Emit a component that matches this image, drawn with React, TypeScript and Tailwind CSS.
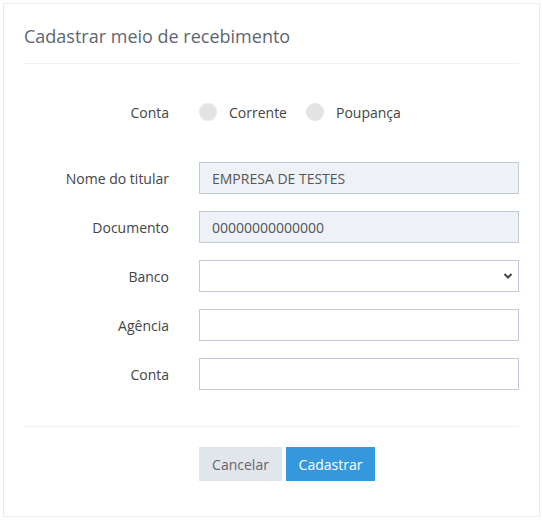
import React from "react";

function Field({ label, children }: { label: string; children: React.ReactNode }) {
  return (
    <div className="flex items-center">
      <label className="w-[145px] pr-0 text-right text-[14px] text-[#444]">{label}</label>
      <div className="ml-[30px] w-[320px]">{children}</div>
    </div>
  );
}

function Radio({ label }: { label: string }) {
  return (
    <label className="flex items-center gap-[12px] text-[14px] text-[#444]">
      <span className="block h-[18px] w-[18px] rounded-full bg-[#e3e3e3]" />
      {label}
    </label>
  );
}

export default function App() {
  return (
    <div className="p-[3px] font-['Open_Sans',sans-serif]">
      <div className="w-[537px] border border-[#e7ecf1] bg-white px-[20px] pb-[35px]">
        {/* Header */}
        <div className="border-b border-[#eef1f5] pt-[19px] pb-[14px]">
          <h1 className="text-[18px] leading-[26px] text-[#5e6670]">Cadastrar meio de recebimento</h1>
        </div>

        {/* Tipo de conta */}
        <div className="mt-[39px] flex h-[18px] items-center">
          <span className="w-[145px] text-right text-[14px] text-[#444]">Conta</span>
          <div className="ml-[30px] flex items-center gap-[19px]">
            <Radio label="Corrente" />
            <Radio label="Poupança" />
          </div>
        </div>

        {/* Campos */}
        <div className="mt-[41px] flex flex-col gap-[17px]">
          <Field label="Nome do titular">
            <input
              readOnly
              value="EMPRESA DE TESTES"
              className="h-[32px] w-full border border-[#c2cad8] bg-[#eef1f5] px-[12px] text-[14px] text-[#555] outline-none"
            />
          </Field>
          <Field label="Documento">
            <input
              readOnly
              value="00000000000000"
              className="h-[32px] w-full border border-[#c2cad8] bg-[#eef1f5] px-[12px] text-[14px] text-[#555] outline-none"
            />
          </Field>
          <Field label="Banco">
            <div className="relative">
              <select className="h-[32px] w-full appearance-none border border-[#c2cad8] bg-white px-[12px] text-[14px] text-[#555] outline-none">
                <option></option>
              </select>
              <svg
                className="pointer-events-none absolute right-[6px] top-[11px]"
                width="10"
                height="10"
                viewBox="0 0 10 10"
              >
                <path d="M1.5 3 L5 6.5 L8.5 3" fill="none" stroke="#444" strokeWidth="2" />
              </svg>
            </div>
          </Field>
          <Field label="Agência">
            <input className="h-[32px] w-full border border-[#c2cad8] bg-white px-[12px] text-[14px] text-[#555] outline-none" />
          </Field>
          <Field label="Conta">
            <input className="h-[32px] w-full border border-[#c2cad8] bg-white px-[12px] text-[14px] text-[#555] outline-none" />
          </Field>
        </div>

        {/* Ações */}
        <div className="mt-[36px] border-t border-[#eef1f5] pt-[20px]">
          <div className="ml-[175px] flex gap-[4px]">
            <button className="h-[34px] w-[83px] bg-[#e1e5ec] text-[14px] text-[#666]">Cancelar</button>
            <button className="h-[34px] w-[89px] bg-[#3598dc] text-[14px] text-white">Cadastrar</button>
          </div>
        </div>
      </div>
    </div>
  );
}
